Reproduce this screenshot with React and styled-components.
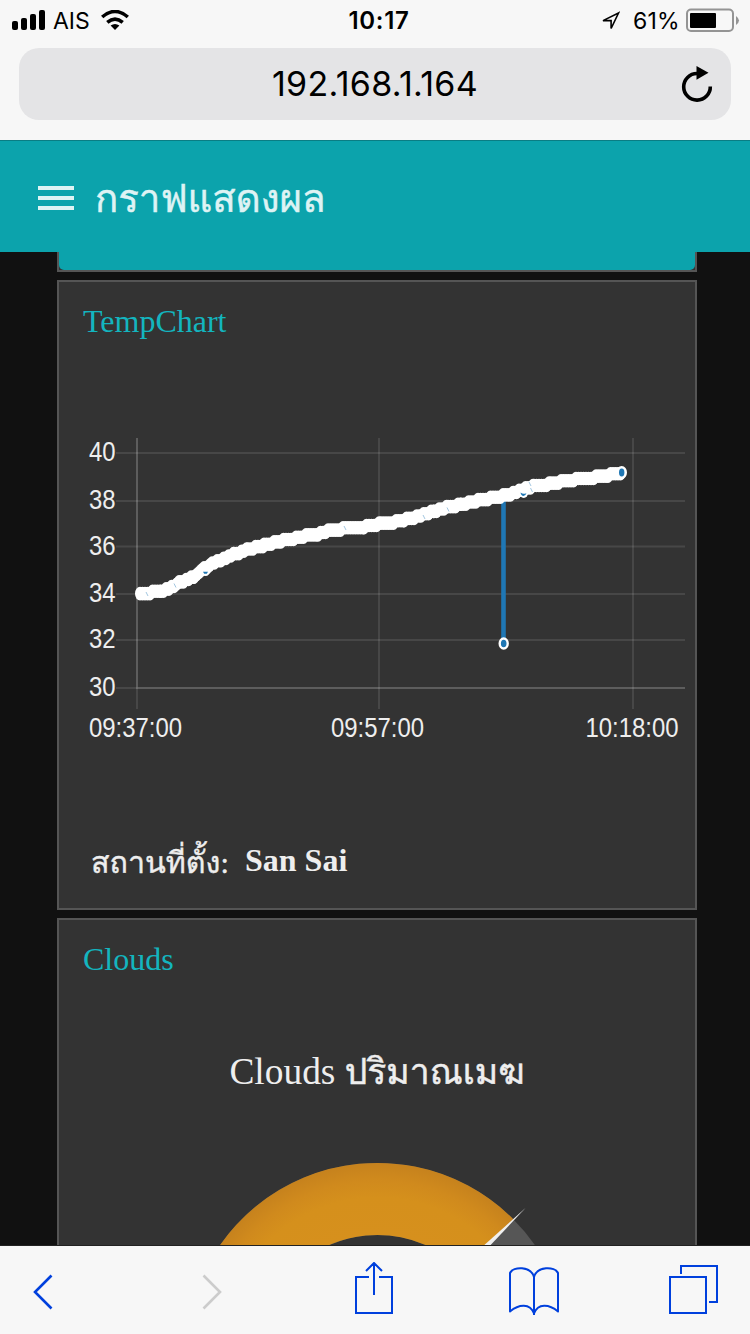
import React from 'react';
import styled, { createGlobalStyle } from 'styled-components';

const GlobalStyle = createGlobalStyle`
  * {
    box-sizing: border-box;
  }

  body {
    margin: 0;
    background: #111;
  }
`;

const thai = "'Liberation Serif', 'Loma', serif";

const Phone = styled.div`
  display: flex;
  flex-direction: column;
  width: 750px;
  height: 1334px;
  overflow: hidden;
  background: #111;
`;

const BrowserTop = styled.div`
  flex: none;
  height: 140px;
  background: #f7f7f7;
  font-family: 'Inter', sans-serif;
  color: #000;
`;

const StatusBar = styled.div`
  display: grid;
  grid-template-columns: 1fr auto 1fr;
  align-items: center;
  height: 40px;
  padding: 0 10px 0 12px;
`;

const StatusGroup = styled.div`
  display: flex;
  align-items: center;
  justify-content: ${(props) => (props.$end ? 'flex-end' : 'flex-start')};
`;

const StatusText = styled.span`
  font-size: ${(props) => props.$size || 23}px;
  font-weight: ${(props) => (props.$bold ? 600 : 400)};
  line-height: 38px;
  padding-top: 2px;
  letter-spacing: ${(props) => props.$spacing || 0}px;
  margin: ${(props) => props.$margin || 0};
`;

const AddressBar = styled.div`
  display: grid;
  grid-template-columns: 52px 1fr 52px;
  align-items: center;
  height: 72px;
  margin: 8px 19px 0;
  border-radius: 20px;
  background: #e4e4e6;
`;

const Address = styled.div`
  grid-column: 2;
  text-align: center;
  font-size: 34px;
  line-height: 72px;
  letter-spacing: 0.3px;
`;

const AppBar = styled.header`
  flex: none;
  display: flex;
  align-items: center;
  height: 112px;
  padding: 2px 38px 0;
  border-top: 1px solid #0a7d84;
  background: #0ca3ac;
`;

const MenuButton = styled.div`
  display: flex;
  flex-direction: column;
  gap: 6px;
  width: 36px;
  margin-right: 21px;

  span {
    height: 4px;
    background: #def3f4;
  }
`;

const AppTitle = styled.h1`
  margin: 0;
  padding-top: 2px;
  font-family: ${thai};
  font-size: 38.4px;
  font-weight: 400;
  line-height: 60px;
  white-space: nowrap;
  color: #def3f4;
  -webkit-text-stroke: 0.5px #def3f4;
`;

const Content = styled.main`
  flex: none;
  display: flex;
  flex-direction: column;
  gap: 8px;
  height: 994px;
  padding: 0 53px 0 57px;
  overflow: hidden;
  border-bottom: 1px solid #222;
`;

const Card = styled.section`
  flex: none;
  height: ${(props) => props.$height}px;
  border: 2px solid #555;
  background: #333;
  overflow: hidden;
`;

const CardTail = styled(Card)`
  border-top: 0;

  div {
    height: 100%;
    border-radius: 0 0 5px 5px;
    background: #0ca3ac;
  }
`;

const CardTitle = styled.h2`
  margin: 0;
  padding: 21px 24px 0;
  font-family: 'Liberation Serif', serif;
  font-size: 32px;
  font-weight: 400;
  line-height: 36px;
  color: #13b5bf;
`;

const ChartBox = styled.div`
  margin-top: 91px;
  height: 330px;

  svg {
    display: block;
  }
`;

const Location = styled.div`
  display: flex;
  align-items: baseline;
  margin-top: 76px;
  padding-left: 32px;
  font-size: 32px;
  line-height: 52px;
  color: #eee;
  white-space: nowrap;

  span {
    width: 154px;
    font-family: ${thai};
    font-size: 30.4px;
    -webkit-text-stroke: 0.4px #eee;
  }

  b {
    position: relative;
    top: -2px;
    font-family: 'Liberation Serif', serif;
  }
`;

const GaugeTitle = styled.div`
  margin-top: 65px;
  height: 60px;
  text-align: center;
  font-family: ${thai};
  font-size: 37.4px;
  line-height: 60px;
  white-space: nowrap;
  color: #eee;

  span {
    font-size: 0.95em;
    -webkit-text-stroke: 0.5px #eee;
  }
`;

const Toolbar = styled.nav`
  flex: none;
  display: grid;
  grid-template-columns: 169px 154px 154px 161px 50px;
  align-items: center;
  height: 88px;
  padding-left: 31px;
  background: #f7f7f7;

  svg {
    display: block;
    fill: none;
    stroke: #0040dd;
    stroke-width: 2;
  }
`;

const readings = [
  [139, 593.3], [160, 592.5], [168, 588.7], [180, 582.3], [193, 576.7],
  [206, 567], [220, 560], [233, 554.7], [247, 550], [263, 545.7],
  [280, 541.3], [300, 537.3], [317, 534.3], [327, 531.2], [347, 528.3],
  [363, 527.3], [380, 524], [390, 523], [403, 520.3], [420, 516],
  [433, 512], [447, 507.7], [460, 505], [477, 500.7], [497, 497.3],
  [513, 493.7], [522, 490], [533, 486.7], [550, 484.3], [570, 480.3],
  [590, 478.3], [607, 475.7], [622, 472.7],
];

const yTicks = [
  [40, 453], [38, 501], [36, 546.5], [34, 594], [32, 640], [30, 688],
];

const xTicks = [
  ['09:37:00', 137, 135.5], ['09:57:00', 379, 377.5], ['10:18:00', 633, 632],
];

// sensor values have a resolution of 0.1 degrees, 2.35px on the axis
const samples = [];
for (let i = 0; i < readings.length - 1; i += 1) {
  const [x1, y1] = readings[i];
  const [x2, y2] = readings[i + 1];
  for (let x = x1; x < x2; x += 2.5) {
    const y = y1 + ((y2 - y1) * (x - x1)) / (x2 - x1);
    samples.push([x, 687.6 - Math.round((688 - y) / 2.35) * 2.35]);
  }
}

const flecks = [
  [147, 594, 2], [175, 585.5, 2], [345, 528, 2], [424, 517, 2],
  [448, 509.5, 2], [530, 484, 2], [531.5, 490, 2],
];

function TempChart() {
  return (
    <svg width="636" height="330" viewBox="59 430 636 330">
      {yTicks.map(([label, y]) => (
        <g key={label}>
          <path d={`M116 ${y}H685`} stroke="#fff" strokeOpacity="0.1" strokeWidth="2" />
          <text
            transform={`translate(115.5 ${y + 8}) scale(0.855 1)`}
            fontFamily="Liberation Sans, sans-serif"
            fontSize="28"
            fill="#eee"
            textAnchor="end"
          >
            {label}
          </text>
        </g>
      ))}
      {xTicks.map(([label, x, center]) => (
        <g key={label}>
          <path d={`M${x} 438V709`} stroke="#fff" strokeOpacity="0.1" strokeWidth="2" />
          <text
            transform={`translate(${center} 737) scale(0.855 1)`}
            fontFamily="Liberation Sans, sans-serif"
            fontSize="28"
            fill="#eee"
            textAnchor="middle"
          >
            {label}
          </text>
        </g>
      ))}
      <path d="M137 438V688H685" fill="none" stroke="#fff" strokeOpacity="0.12" strokeWidth="2" />
      <path d="M503.5 497V642" stroke="#1f77b4" strokeWidth="4.6" />
      {samples.map(([x, y]) => (
        <ellipse key={x} cx={x + 1} cy={y} rx="5" ry="6.8" fill="#fff" />
      ))}
      <ellipse cx="205.7" cy="570.5" rx="4.2" ry="5.6" fill="#fff" />
      <path d="M203 571.8h5l-1.2 2h-2.6z" fill="#1f77b4" />
      <ellipse cx="523.7" cy="492" rx="4.6" ry="6" fill="#fff" />
      <path d="M520.5 492.5q3 2.4 6 .4q-1 3-3 3q-2.4 0-3-3.4z" fill="#1f77b4" />
      {flecks.map(([x, y, h]) => (
        <path key={x} d={`M${x - 1} ${y - h}l2 ${h * 2}`} stroke="#1f77b4" strokeOpacity="0.6" strokeWidth="0.7" />
      ))}
      <ellipse cx="621.7" cy="472.5" rx="4" ry="5.2" fill="#1f77b4" stroke="#fff" strokeWidth="2.6" />
      <ellipse cx="503.7" cy="643.5" rx="4" ry="5" fill="#1f77b4" stroke="#fff" strokeWidth="2.4" />
    </svg>
  );
}

const GaugeBox = styled.div`
  margin-top: 58px;

  svg {
    display: block;
  }
`;

function CloudGauge() {
  return (
    <svg width="636" height="100" viewBox="59 1160 636 100">
      <defs>
        <radialGradient id="amber" gradientUnits="userSpaceOnUse" cx="377.5" cy="1355" r="192">
          <stop offset="0.62" stopColor="#d6901d" />
          <stop offset="0.82" stopColor="#d5901c" />
          <stop offset="0.91" stopColor="#d08a1d" />
          <stop offset="1" stopColor="#c6821d" />
        </radialGradient>
      </defs>
      <path d="M185.5 1355A192 192 0 0 1 569.5 1355H497.5A120 120 0 0 0 257.5 1355Z" fill="#565656" />
      <path d="M185.5 1355A192 192 0 0 1 513.3 1219.2L462.4 1270.1A120 120 0 0 0 257.5 1355Z" fill="url(#amber)" />
      <path d="M525.5 1208L362 1355H387Z" fill="#f0f0f0" />
    </svg>
  );
}

function App() {
  return (
    <>
      <GlobalStyle />
      <Phone>
        <BrowserTop>
          <StatusBar>
            <StatusGroup>
              <svg width="33" height="20" viewBox="0 0 33 20">
                <rect x="0" y="11" width="6" height="9" rx="2" />
                <rect x="9" y="8" width="6" height="12" rx="2" />
                <rect x="18" y="4" width="6" height="16" rx="2" />
                <rect x="27" y="0" width="6" height="20" rx="2" />
              </svg>
              <StatusText $margin="0 11px 0 8px">AIS</StatusText>
              <svg width="28" height="20" viewBox="0 0 28 20" fill="none" stroke="#000" strokeWidth="3.6">
                <path d="M1.2 7Q14-4 26.8 7" />
                <path d="M6.3 12.4Q14 6 21.7 12.4" />
                <path d="M14 20L9.6 15.6Q14 12.4 18.4 15.6Z" fill="#000" stroke="none" />
              </svg>
            </StatusGroup>
            <StatusText $bold $size={24} $spacing={0.7} $margin="0 0 0 6px">10:17</StatusText>
            <StatusGroup $end>
              <svg width="20" height="20" viewBox="0 -1 20 20" fill="none" stroke="#000" strokeWidth="1.6">
                <path d="M18.5 2L3 9.6H11.1V17.5Z" />
              </svg>
              <StatusText $spacing={0.3} $margin="0 6px 0 13px">61%</StatusText>
              <svg width="54" height="24" viewBox="0 0 54 24">
                <rect x="1" y="1.5" width="46" height="21.5" rx="4" fill="none" stroke="#949494" strokeWidth="2" />
                <rect x="4" y="5" width="26" height="15" rx="1" />
                <path d="M50 8Q56 12.5 50 17Z" fill="#949494" />
              </svg>
            </StatusGroup>
          </StatusBar>
          <AddressBar>
            <Address>192.168.1.164</Address>
            <svg width="36" height="40" viewBox="0 0 36 40">
              <path d="M18 9.5A13.3 13.3 0 1 0 31.3 22.5" fill="none" stroke="#000" strokeWidth="3.6" />
              <path d="M17.5 2L29.5 8.7L17.5 15.8Z" />
            </svg>
          </AddressBar>
        </BrowserTop>

        <AppBar>
          <MenuButton>
            <span />
            <span />
            <span />
          </MenuButton>
          <AppTitle>กราฟแสดงผล</AppTitle>
        </AppBar>

        <Content>
          <CardTail $height={20}>
            <div />
          </CardTail>
          <Card $height={630}>
            <CardTitle>TempChart</CardTitle>
            <ChartBox>
              <TempChart />
            </ChartBox>
            <Location>
              <span>สถานที่ตั้ง:</span>
              <b>San Sai</b>
            </Location>
          </Card>
          <Card $height={400}>
            <CardTitle>Clouds</CardTitle>
            <GaugeTitle>
              Clouds <span>ปริมาณเมฆ</span>
            </GaugeTitle>
            <GaugeBox>
              <CloudGauge />
            </GaugeBox>
          </Card>
        </Content>

        <Toolbar>
          <svg width="24" height="40" viewBox="0 -2 24 40">
            <path d="M20.5 3.5L4 20L20.5 36.5" style={{ strokeWidth: 2.6 }} />
          </svg>
          <svg width="24" height="40" viewBox="0 -2 24 40" style={{ stroke: '#ccc' }}>
            <path d="M3.5 3.5L20 20L3.5 36.5" style={{ strokeWidth: 2.6 }} />
          </svg>
          <svg width="40" height="56" viewBox="0 2 40 56">
            <path d="M15 17H2V53H38V17H25M20 35V3M12 11L20 3L28 11" />
          </svg>
          <svg width="52" height="54" viewBox="0 -3 52 54" strokeLinejoin="round">
            <path d="M26 9V49" />
            <path d="M26 11C23 0 5 0 2 7V45.500C11 38 22 37 26 47.500C30 37 41 38 50 45.500V7C47 0 29 0 26 11Z" />
          </svg>
          <svg width="50" height="50" viewBox="0 0 50 50">
            <path d="M1 12H37V48H1ZM12 9V1H48V37H40" />
          </svg>
        </Toolbar>
      </Phone>
    </>
  );
}

export default App;
